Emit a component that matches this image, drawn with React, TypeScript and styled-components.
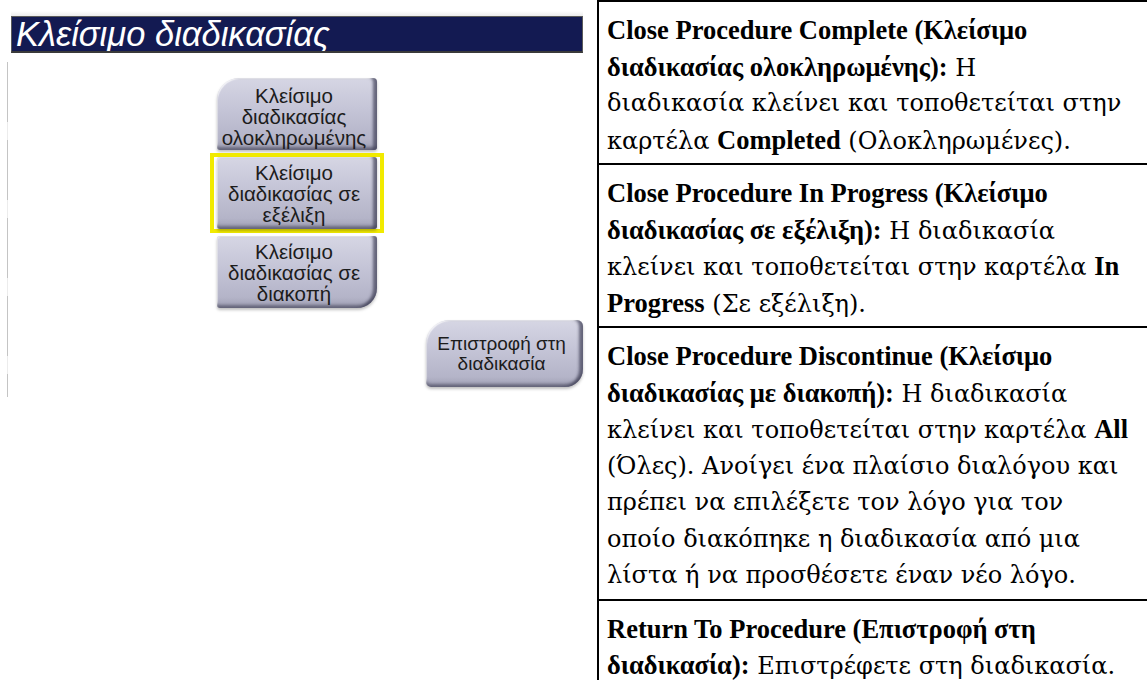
import React from "react";
import styled, { createGlobalStyle, css } from "styled-components";

const GlobalStyle = createGlobalStyle`
  html, body {
    margin: 0;
    padding: 0;
    background: #ffffff;
    overflow: hidden;
  }
  body {
    font-family: "Liberation Sans", Arial, sans-serif;
  }
`;

const Page = styled.div`
  display: flex;
  width: 1147px;
  height: 680px;
  overflow: hidden;
  background: #ffffff;
`;

const LeftPanel = styled.div`
  flex: 0 0 597px;
  box-sizing: border-box;
  padding: 11px 14px 0 11px;
  display: flex;
  flex-direction: column;
  background-image: repeating-linear-gradient(
    to bottom,
    #c4c4c4 0px,
    #c4c4c4 60px,
    #ececec 60px,
    #ececec 78px
  );
  background-size: 1px 335px;
  background-position: 7px 62px;
  background-repeat: no-repeat;
`;

const TopStrip = styled.div`
  height: 5px;
  background: linear-gradient(to bottom, #ffffff, #ececec);
`;

const Header = styled.div`
  height: 37px;
  box-sizing: border-box;
  background: #131a52;
  border: 1px solid #5a5a5a;
  border-bottom: 2px solid #3a3a3a;
  display: flex;
  align-items: center;
  padding-left: 4px;
  overflow: hidden;
`;

const Title = styled.h1`
  margin: 0;
  font-family: "Liberation Sans", Arial, sans-serif;
  font-style: italic;
  font-weight: normal;
  font-size: 34.5px;
  line-height: 34px;
  color: #ffffff;
`;

const ButtonStack = styled.div`
  margin-top: 25px;
  display: flex;
  flex-direction: column;
  align-items: center;
  gap: 3px;
`;

type Shape = "top" | "middle" | "bottom" | "return";

const radii: Record<Shape, string> = {
  top: "22px 4px 3px 3px",
  middle: "3px",
  bottom: "3px 3px 20px 3px",
  return: "24px 6px 18px 5px",
};

const ActionButton = styled.button<{ $shape: Shape }>`
  box-sizing: border-box;
  width: ${(p) => (p.$shape === "return" ? "157px" : "160px")};
  height: ${(p) => (p.$shape === "return" ? "67px" : "72px")};
  border: none;
  border-radius: ${(p) => radii[p.$shape]};
  padding: 0 6px 0 0;
  background: linear-gradient(
    to bottom,
    #d6d6e4 0%,
    #c6c6d8 40%,
    #b4b4c8 85%,
    #9e9eb2 100%
  );
  box-shadow: inset -5px 0 3px -1px rgba(70, 70, 92, 0.75),
    inset 0 -4px 3px -1px rgba(70, 70, 92, 0.6),
    inset 1px 1px 1px rgba(255, 255, 255, 0.7),
    0 2px 3px rgba(0, 0, 0, 0.25);
  font-family: "Liberation Sans", Arial, sans-serif;
  font-size: ${(p) => (p.$shape === "return" ? "19px" : "20.5px")};
  line-height: ${(p) => (p.$shape === "return" ? "20px" : "21px")};
  color: #1c1c1c;
  text-align: center;
  display: flex;
  align-items: center;
  justify-content: center;
  white-space: nowrap;
  cursor: pointer;
  ${(p) =>
    p.$shape === "top" &&
    css`
      padding-top: 4px;
    `}
`;

const Highlight = styled.div`
  border: 4px solid #f1ea00;
  padding: 0 3px;
  display: flex;
`;

const ReturnRow = styled.div`
  margin-top: 12px;
  display: flex;
  justify-content: flex-end;
`;

const Table = styled.div`
  flex: 0 0 590px;
  box-sizing: border-box;
  border-left: 2px solid #000;
  border-top: 2px solid #000;
  display: flex;
  flex-direction: column;
  font-family: "DejaVu Serif", "Liberation Serif", serif;
  font-size: 24px;
  color: #000;
`;

const Row = styled.div<{ $last?: boolean }>`
  padding: 10px 0 5px 8px;
  border-bottom: ${(p) => (p.$last ? "none" : "2px solid #000")};
`;

const Line = styled.div`
  height: 36.5px;
  line-height: 36.5px;
  white-space: nowrap;
`;

const B = styled.b`
  font-family: "Liberation Serif", "DejaVu Serif", serif;
  font-weight: bold;
  font-size: 26.5px;
`;

export default function App() {
  return (
    <>
      <GlobalStyle />
      <Page>
        <LeftPanel>
          <TopStrip />
          <Header>
            <Title>Κλείσιμο διαδικασίας</Title>
          </Header>
          <ButtonStack>
            <ActionButton $shape="top">
              Κλείσιμο
              <br />
              διαδικασίας
              <br />
              ολοκληρωμένης
            </ActionButton>
            <Highlight>
              <ActionButton $shape="middle">
                Κλείσιμο
                <br />
                διαδικασίας σε
                <br />
                εξέλιξη
              </ActionButton>
            </Highlight>
            <ActionButton $shape="bottom">
              Κλείσιμο
              <br />
              διαδικασίας σε
              <br />
              διακοπή
            </ActionButton>
          </ButtonStack>
          <ReturnRow>
            <ActionButton $shape="return">
              Επιστροφή στη
              <br />
              διαδικασία
            </ActionButton>
          </ReturnRow>
        </LeftPanel>
        <Table>
          <Row>
            <Line>
              <B>Close Procedure Complete (Κλείσιμο</B>
            </Line>
            <Line>
              <B>διαδικασίας ολοκληρωμένης):</B> Η
            </Line>
            <Line>διαδικασία κλείνει και τοποθετείται στην</Line>
            <Line>
              καρτέλα <B>Completed</B> (Ολοκληρωμένες).
            </Line>
          </Row>
          <Row>
            <Line>
              <B>Close Procedure In Progress (Κλείσιμο</B>
            </Line>
            <Line>
              <B>διαδικασίας σε εξέλιξη):</B> Η διαδικασία
            </Line>
            <Line>
              κλείνει και τοποθετείται στην καρτέλα <B>In</B>
            </Line>
            <Line>
              <B>Progress</B> (Σε εξέλιξη).
            </Line>
          </Row>
          <Row>
            <Line>
              <B>Close Procedure Discontinue (Κλείσιμο</B>
            </Line>
            <Line>
              <B>διαδικασίας με διακοπή):</B> Η διαδικασία
            </Line>
            <Line>
              κλείνει και τοποθετείται στην καρτέλα <B>All</B>
            </Line>
            <Line>(Όλες). Ανοίγει ένα πλαίσιο διαλόγου και</Line>
            <Line>πρέπει να επιλέξετε τον λόγο για τον</Line>
            <Line>οποίο διακόπηκε η διαδικασία από μια</Line>
            <Line>λίστα ή να προσθέσετε έναν νέο λόγο.</Line>
          </Row>
          <Row $last>
            <Line>
              <B>Return To Procedure (Επιστροφή στη</B>
            </Line>
            <Line>
              <B>διαδικασία):</B> Επιστρέφετε στη διαδικασία.
            </Line>
          </Row>
        </Table>
      </Page>
    </>
  );
}
